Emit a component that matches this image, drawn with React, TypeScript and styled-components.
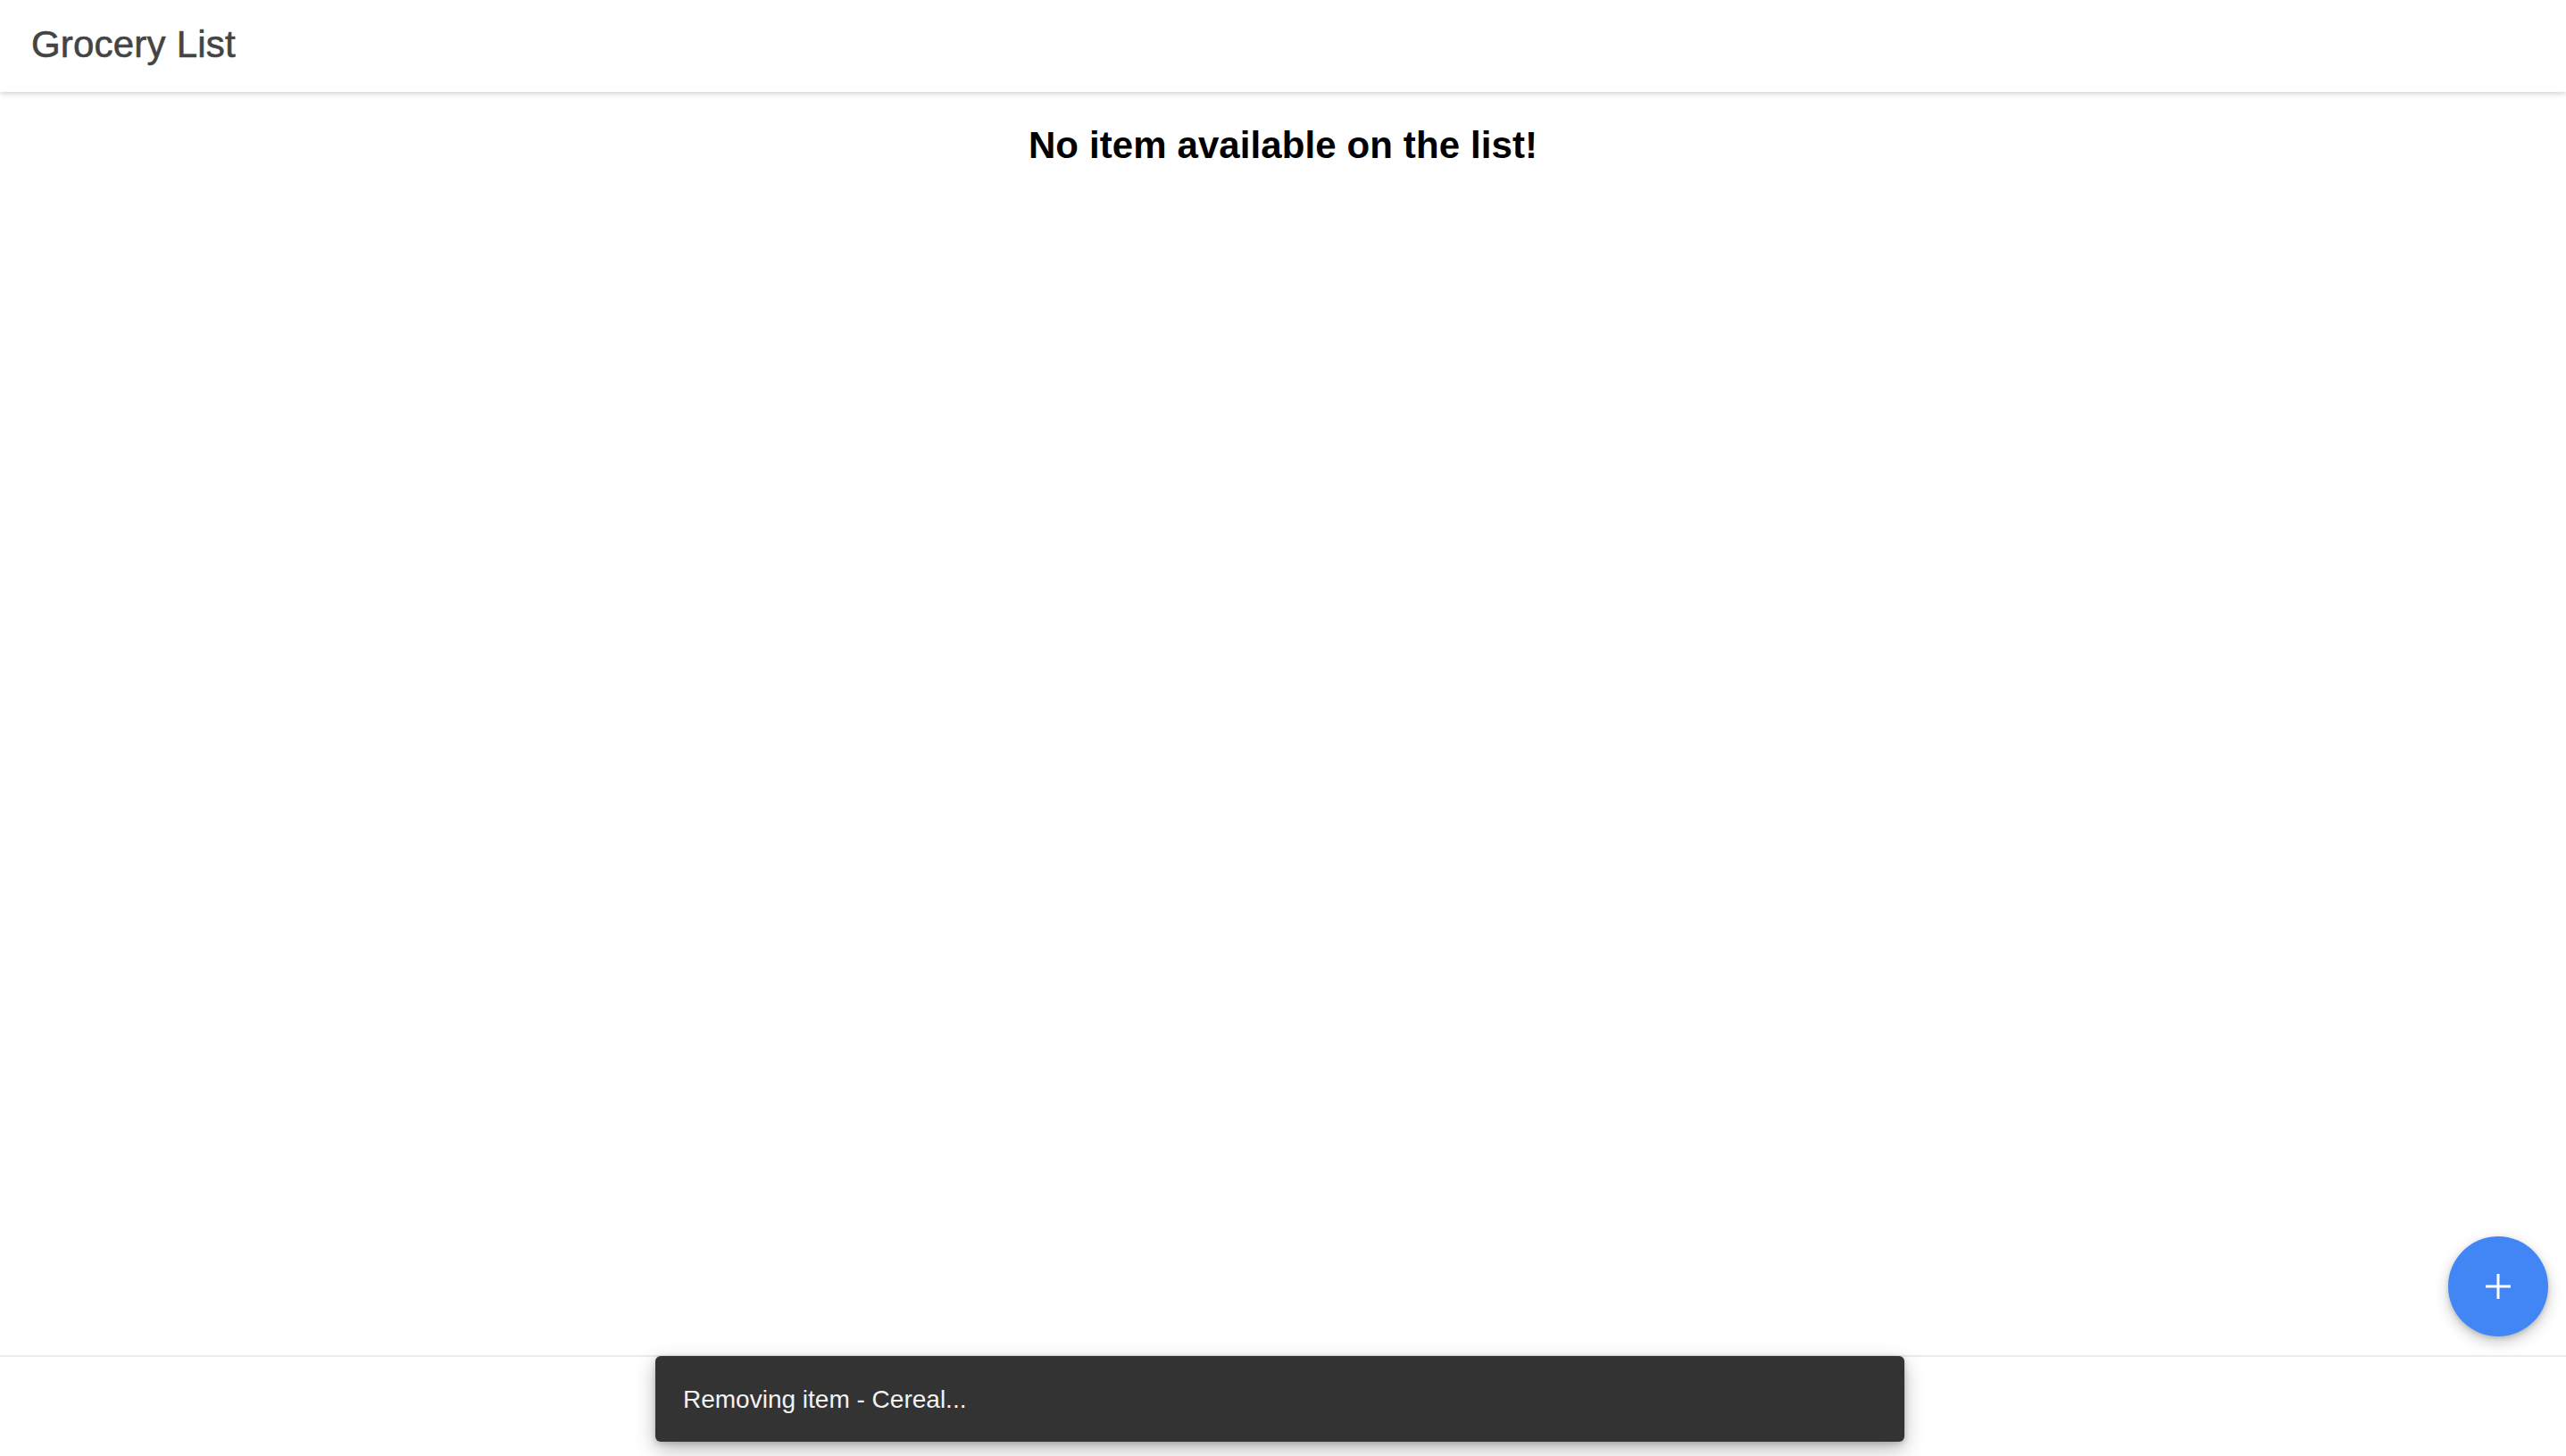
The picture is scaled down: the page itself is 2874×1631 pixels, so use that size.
import React from "react";
import styled, { createGlobalStyle } from "styled-components";

const GlobalStyle = createGlobalStyle`
  html, body {
    margin: 0;
    padding: 0;
    height: 100%;
    background: #ffffff;
    font-family: "Liberation Sans", Arial, Helvetica, sans-serif;
  }
  #root {
    height: 100%;
  }
  * { box-sizing: border-box; }
`;

const Page = styled.div`
  position: relative;
  display: flex;
  flex-direction: column;
  height: 100vh;
  overflow: hidden;
`;

const Toolbar = styled.header`
  position: relative;
  z-index: 2;
  display: flex;
  align-items: center;
  height: 103px;
  padding: 0 35px;
  background: #ffffff;
  box-shadow: 0 2px 6px rgba(0, 0, 0, 0.18);
`;

const Title = styled.h1`
  margin: 0;
  padding-bottom: 4px;
  font-size: 42px;
  font-weight: 400;
  color: #444444;
  letter-spacing: 0.2px;
  -webkit-text-stroke: 0.6px #444444;
`;

const Content = styled.main`
  flex: 1;
  display: flex;
  flex-direction: column;
  align-items: center;
  padding-top: 36px;
`;

const EmptyMessage = styled.h2`
  margin: 0;
  font-size: 42px;
  font-weight: 700;
  letter-spacing: 0.1px;
  color: #000000;
`;

const Footer = styled.footer`
  height: 113px;
  border-top: 2px solid #ebebeb;
  background: #ffffff;
`;

const Fab = styled.button`
  position: absolute;
  right: 20px;
  bottom: 134px;
  width: 112px;
  height: 112px;
  border: none;
  border-radius: 50%;
  background: #4285f4;
  display: flex;
  align-items: center;
  justify-content: center;
  padding: 0;
  cursor: pointer;
  box-shadow: 0 6px 16px rgba(0, 0, 0, 0.22), 0 2px 5px rgba(0, 0, 0, 0.14);
`;

const Snackbar = styled.div`
  position: absolute;
  left: 50%;
  bottom: 16px;
  margin-left: -703px;
  width: 1399px;
  height: 96px;
  display: flex;
  align-items: center;
  padding: 0 31px;
  border-radius: 6px;
  background: #333333;
  box-shadow: 0 8px 22px rgba(0, 0, 0, 0.28), 0 2px 6px rgba(0, 0, 0, 0.18);
  z-index: 3;
`;

const SnackText = styled.span`
  font-size: 28px;
  color: #f2f2f2;
  padding-top: 2px;
`;

const PlusIcon = () => (
  <svg width="30" height="30" viewBox="0 0 30 30" aria-hidden="true">
    <path d="M15 1v28M1 15h28" stroke="#ffffff" strokeWidth="3" fill="none" />
  </svg>
);

export default function App() {
  return (
    <Page>
      <GlobalStyle />
      <Toolbar>
        <Title>Grocery List</Title>
      </Toolbar>
      <Content>
        <EmptyMessage>No item available on the list!</EmptyMessage>
      </Content>
      <Footer />
      <Fab aria-label="Add item">
        <PlusIcon />
      </Fab>
      <Snackbar>
        <SnackText>Removing item - Cereal...</SnackText>
      </Snackbar>
    </Page>
  );
}
